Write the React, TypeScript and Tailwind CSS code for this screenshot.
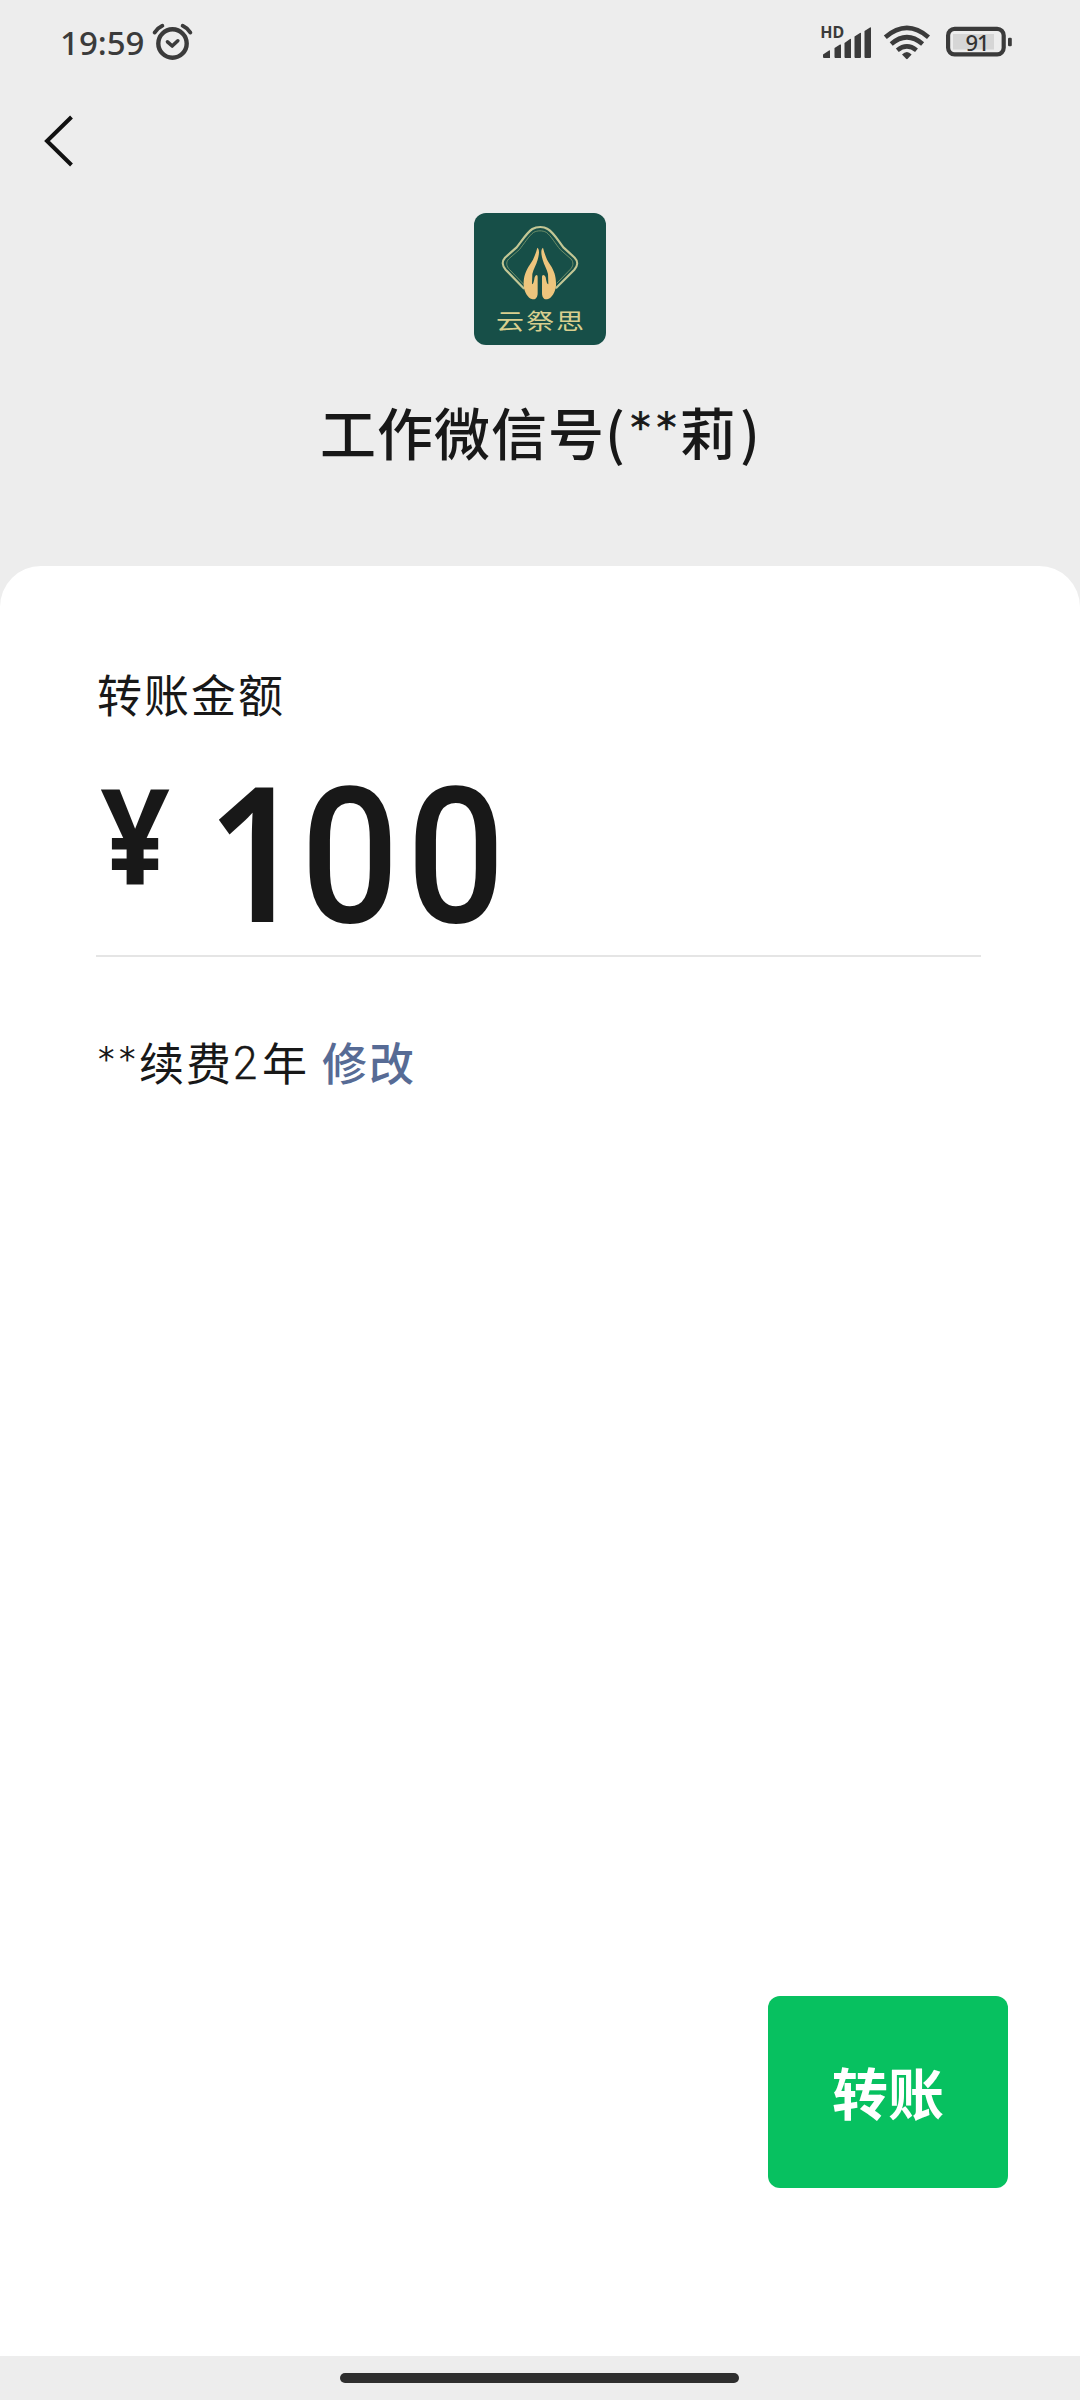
function AlarmIcon() {
  return (
    <svg className="h-[40px] w-[44px]" viewBox="150 22 44 40" fill="none" stroke="#3b3b3b" strokeLinecap="round" strokeLinejoin="round">
      <circle cx="172.5" cy="43.5" r="14.2" strokeWidth="4.4" />
      <path d="M167.5 41.8 172.2 46 177.8 40.8" strokeWidth="3.6" />
      <path d="M154.7 32.5Q157.5 28 162.3 25.8M182.7 25.8Q187.5 28 190.3 32.5" strokeWidth="4" />
    </svg>
  );
}

function SignalIcon() {
  return (
    <svg className="h-[40px] w-[56px]" viewBox="818 22 56 40" fill="#3b3b3b">
      <text x="820.3" y="37.6" fontSize="16" fontWeight="700" fontFamily="'Noto Sans', sans-serif" textLength="24">HD</text>
      <path d="M823 54.5 829 50.5Q830 50 830 51V58H824Q823 58 823 57ZM834.5 48 840 44.6Q841 44 841 45.2V58H835.5Q834.5 58 834.5 57ZM844.5 43 850 39Q851 38.4 851 39.5V58H845.5Q844.5 58 844.5 57ZM854.5 36.5 860 33Q861 32.4 861 33.5V57Q861 58 860 58H855.5Q854.5 58 854.5 57ZM864.5 31 870 27.5Q871 27 871 28V57Q871 58 870 58H865.5Q864.5 58 864.5 57Z" />
    </svg>
  );
}

function WifiIcon() {
  return (
    <svg className="h-[40px] w-[50px]" viewBox="882 22 50 40" fill="none" stroke="#3b3b3b" strokeWidth="4.6">
      <path d="M885.3 37.2Q906.9 18.5 928.5 37.2" />
      <path d="M891.2 44Q906.9 30.5 922.6 44" />
      <path d="M897.3 50.2Q906.9 42.6 916.5 50.2" />
      <path d="M902 54.5Q906.9 49.5 911.6 54.5L907.7 58.8Q906.9 59.5 906.1 58.8Z" fill="#3b3b3b" stroke="none" />
    </svg>
  );
}

function BatteryIcon() {
  return (
    <svg className="h-[40px] w-[70px]" viewBox="944 22 70 40">
      <rect x="953" y="34" width="41" height="15.5" fill="#d6d6d6" />
      <rect x="948.1" y="28.9" width="55.6" height="25.4" rx="6.5" fill="none" stroke="#3b3b3b" strokeWidth="4.2" />
      <rect x="1008" y="37.8" width="3.8" height="8.4" rx="1.2" fill="#3b3b3b" />
      <text x="965.5" y="50.6" fontSize="22" fontWeight="500" fill="#333" fontFamily="'Noto Sans', sans-serif" textLength="24">91</text>
    </svg>
  );
}

function Logo() {
  return (
    <div className="flex h-[132px] w-[132px] flex-col items-center overflow-hidden rounded-[12px] bg-[#174f48]">
      <svg className="h-[92px] w-[132px] shrink-0" viewBox="27 24 396 276" fill="none" strokeLinecap="round">
        <path d="M176 250 122 194C112 183 110 169 120 158L154 128C168 112 184 84 202 72C216 64 236 64 248 72C268 84 282 112 296 128L329 158C340 169 338 183 328 194L274 248" stroke="#c3c795" strokeWidth="6.5" />
        <path d="M176 238 134 194C124 184 122 172 131 162L163 134C176 118 192 92 206 82C218 76 232 76 244 82C258 92 272 118 286 134L318 162C327 172 325 184 315 194L276 234" stroke="#7f9b70" strokeWidth="2.5" />
        <g fill="#eec57d">
          <path d="M217 128C224 132 223 148 218 164C214 180 205 192 202 207L201 238C205 238 207 228 209 217C213 207 218 208 218 216V264C218 278 211 286 200 282C189 278 178 262 176 242C175 216 182 198 194 180C206 164 212 146 217 128Z" />
          <path d="M234 128C227 132 228 148 233 164C237 180 246 192 249 207L250 238C246 238 244 228 242 217C238 207 231 208 231 216V264C231 278 238 286 249 282C260 278 271 262 273 242C274 216 268 198 256 180C244 164 239 146 234 128Z" />
        </g>
      </svg>
      <div className="-mt-[2px] origin-center scale-y-[.78] pl-[2px] text-[28px] leading-[34px] tracking-[2px] text-[#d9cf8f]">云祭思</div>
    </div>
  );
}

export default function App() {
  return (
    <div className="flex h-[2400px] w-[1080px] flex-col overflow-hidden bg-[#ededed] font-['Noto_Sans_CJK_SC',sans-serif] text-[#181818]">
      <header className="flex h-[566px] shrink-0 flex-col">
        <div className="flex h-[62px] shrink-0 pt-[22px] pl-[60px] pr-[66px]">
          <span className="w-[90px] font-['Noto_Sans',sans-serif] text-[33px] leading-[42px] font-medium text-[#3b3b3b]">19:59</span>
          <AlarmIcon />
          <div className="ml-auto flex">
            <SignalIcon />
            <div className="w-[8px]" />
            <WifiIcon />
            <div className="w-[12px]" />
            <BatteryIcon />
          </div>
        </div>
        <div className="h-[151px] shrink-0 pt-[50px] pl-[40px]">
          <svg className="h-[58px] w-[36px]" viewBox="40 112 36 58" fill="none" stroke="#111" strokeWidth="4">
            <path d="M71.5 117 47 141 71.5 165" />
          </svg>
        </div>
        <div className="flex flex-col items-center">
          <Logo />
          <h1 className="mt-[44px] flex w-[440px] text-[56px] leading-[84px] font-medium whitespace-nowrap">
            <span className="w-[285px] tracking-[1px]">工作微信号</span>
            <span className="w-[26px]">(</span>
            <span className="-mt-[3px] w-[49px] font-['DejaVu_Sans',sans-serif] text-[40px] tracking-[6px] [-webkit-text-stroke:0.7px_#181818]">**</span>
            <span className="w-[62px]">莉</span>
            <span>)</span>
          </h1>
        </div>
      </header>

      <main className="flex flex-1 flex-col rounded-t-[41px] bg-white pl-[97px] pr-[72px]">
        <div className="mt-[95px] text-[45px] leading-[66px] tracking-[2px]">转账金额</div>
        <div className="-ml-px flex h-[230px] w-[885px] border-b-2 border-[#e5e5e5] font-['Noto_Sans',sans-serif]">
          <span className="w-[112px] origin-left scale-x-[.92] pt-[40px] pl-[5px] text-[132px] leading-[132px] font-bold">¥</span>
          <span className="-ml-px w-[90px] origin-left scale-x-[.9] pt-[28px] text-[188px] leading-[188px] font-semibold">1</span>
          <span className="-ml-px w-[106px] scale-x-[.91] pt-[36px] font-[Roboto,sans-serif] text-[190px] leading-[188px] font-medium">0</span>
          <span className="w-[106px] scale-x-[.91] pt-[36px] font-[Roboto,sans-serif] text-[190px] leading-[188px] font-medium">0</span>
        </div>
        <div className="mt-[72px] flex text-[45px] leading-[66px] tracking-[2px] whitespace-nowrap">
          <span className="-mt-[2px] ml-px w-[41px] font-['DejaVu_Sans',sans-serif] text-[33px] font-normal tracking-[4.5px]">**</span>
          <span className="w-[94px]">续费</span>
          <span className="w-[29px] origin-left scale-x-[.93] pt-px font-[Roboto,sans-serif] text-[47px] font-light [-webkit-text-stroke:0.4px_#181818]">2</span>
          <span className="w-[60px]">年</span>
          <span className="font-medium text-[#576b95]">修改</span>
        </div>
        <button className="mt-auto mb-[168px] flex h-[192px] w-[240px] items-center justify-center self-end rounded-[12px] bg-[#07c160] pb-[3px] text-[56px] font-bold text-white">转账</button>
      </main>

      <footer className="flex h-[44px] shrink-0 justify-center pt-[17px]">
        <div className="mr-[2px] h-[10px] w-[399px] rounded-full bg-[#2e2e2e]" />
      </footer>
    </div>
  );
}
